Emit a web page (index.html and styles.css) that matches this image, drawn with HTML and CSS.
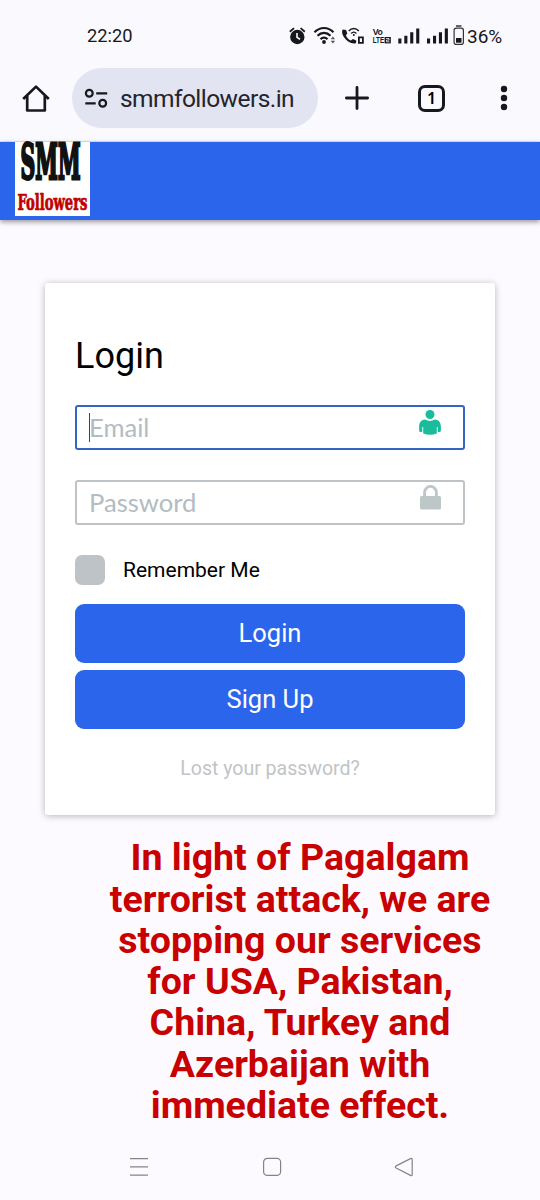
FILE: index.html
```html
<!DOCTYPE html>
<html lang="en">
<head>
    <meta charset="UTF-8">
    <meta name="viewport" content="width=device-width, initial-scale=1.0">
    <title>SMM Followers - Login</title>
    <link rel="stylesheet" href="styles.css">
</head>
<body>
    <!-- Status bar -->
    <div class="status-bar">
        <span class="time">22:20</span>
        <div class="status-icons">
            <svg width="22" height="24" viewBox="287 24 22 24">
                <circle cx="297.3" cy="37" r="7.2" fill="#17181d"/>
                <path d="M289.8 31.7l4.2-3.6M304.8 31.7l-4.2-3.6" stroke="#17181d" stroke-width="1.8"/>
                <path d="M297 33v4.4l3 1.8" fill="none" stroke="#faf9fe" stroke-width="1.6"/>
            </svg>
            <svg width="29" height="24" viewBox="309 24 29 24" fill="none" stroke="#17181d">
                <path d="M314.5 32.2c5.6-5.6 13.4-5.6 19 0M317.5 35.8c3.8-3.8 9.2-3.8 13 0M320.5 39.2c2-2.1 5-2.1 7 0" stroke-width="2.2"/>
                <circle cx="324" cy="42" r="1.9" fill="#17181d" stroke="none"/>
                <path d="M330.7 39.2l2.2-2.6 2.2 2.6zM330.7 40.8l2.2 2.6 2.2-2.6z" fill="#555" stroke="none"/>
            </svg>
            <svg width="32" height="24" viewBox="338 24 32 24" fill="none" stroke="#17181d">
                <path d="M342.8 29.6c-3 4 3.8 13.6 11.4 14 1.2 0 2-.7 2-1.6v-1.6l-3.3-1.4-2 1.6c-2.2-.9-4.2-3.1-5-5.3l1.4-1.9-1.2-3.5z" fill="#17181d" stroke="none"/>
                <path d="M348.8 31c2.8-3.4 7.2-3.4 10 0M351.2 33.5c1.6-1.9 3.6-1.9 5.2 0" stroke-width="1.4"/>
                <circle cx="353.8" cy="35" r="1" fill="#17181d" stroke="none"/>
                <path d="M358.9 37.4h4v5.4h-4z" stroke-width="1.8"/>
            </svg>
            <svg class="volte" width="24" height="24" viewBox="370 24 24 24">
                <text x="372.7" y="35" font-size="8.7" textLength="10">Vo</text>
                <text x="372.7" y="43.3" font-size="8.7" textLength="11.5" lengthAdjust="spacingAndGlyphs">LTE</text>
                <rect x="384.6" y="37" width="6.2" height="6.4" fill="#17181d"/>
                <path d="M386 38.5h3v1.6h-2.5v1.7h3" fill="none" stroke="#faf9fe" stroke-width=".8"/>
            </svg>
            <svg width="29" height="24" viewBox="394 24 29 24" fill="#17181d">
                <path d="M398.3 38.5h3.1v5h-3.1zM404.3 35.7h3.1v7.8h-3.1zM410.2 32.3h3.1v11.2h-3.1zM416.2 28.5h3.1v15h-3.1z"/>
            </svg>
            <svg width="28" height="24" viewBox="423 24 28 24" fill="#17181d">
                <path d="M427 38.5h3.1v5H427zM433 35.7h3.1v7.8H433zM438.9 32.3h3.1v11.2h-3.1zM444.8 28.5h3.1v15h-3.1z"/>
            </svg>
            <svg width="16" height="24" viewBox="451 24 16 24">
                <rect x="454.1" y="28.1" width="9.3" height="16.3" rx="2.2" fill="none" stroke="#333" stroke-width="1.2"/>
                <path d="M456 26h5.4" stroke="#333" stroke-width="1.5"/>
                <rect x="456" y="38" width="5.5" height="4.7" fill="#17181d"/>
            </svg>
            <span class="battery">36%</span>
        </div>
    </div>

    <!-- Browser toolbar -->
    <div class="toolbar">
        <svg class="home" width="28" height="28" viewBox="0 0 28 28" fill="none" stroke="#17181d" stroke-width="2.7" stroke-linejoin="round">
            <path d="M1.2 15L14 2.6 26.8 15M5.2 12v14.5h17.6V12" />
        </svg>
        <div class="address">
            <svg width="24" height="20" viewBox="0 0 24 20" fill="none" stroke="#17181d" stroke-width="2.2">
                <circle cx="5.3" cy="5.3" r="3.4"/>
                <path d="M12.2 5.4h11M1.3 15.3h10.4"/>
                <circle cx="18.7" cy="15.3" r="3.4"/>
            </svg>
            <span>smmfollowers.in</span>
        </div>
        <svg class="plus" width="24" height="24" viewBox="0 0 24 24" stroke="#17181d" stroke-width="2.8" stroke-linecap="round">
            <path d="M12 1.4v21.2M1.4 12h21.2"/>
        </svg>
        <div class="tabs">1</div>
        <svg class="dots" width="8" height="26" viewBox="0 0 8 26" fill="#17181d">
            <circle cx="4" cy="4" r="3.2"/>
            <circle cx="4" cy="13" r="3.2"/>
            <circle cx="4" cy="22" r="3.2"/>
        </svg>
    </div>

    <header class="header">
        <svg class="logo" width="75" height="74" viewBox="0 0 75 74">
            <rect width="75" height="74" fill="#fff"/>
            <text class="logo-smm" transform="translate(5.5 37) scale(1 1.4)" textLength="60" lengthAdjust="spacingAndGlyphs">SMM</text>
            <text class="logo-followers" transform="translate(2.5 67.5)" textLength="70" lengthAdjust="spacingAndGlyphs">Followers</text>
        </svg>
    </header>

    <main>
        <form class="login-form">
            <h1>Login</h1>
            <div class="field active">
                <span class="caret"></span>
                <span class="placeholder">Email</span>
                <svg class="user" width="22" height="26" viewBox="0 0 22 26" fill="#1abc9c">
                    <circle cx="11" cy="4.5" r="4.5"/>
                    <path d="M6 9.6Q11 12.2 16 9.6C20 9.9 21.9 12.8 21.9 16.9v3.6q0 1.5-1.5 1.5h-1.7v-5h-.9v6.4q-6.8 2.6-13.6 0V17h-.9v5H1.6Q.1 22 .1 20.5v-3.6C.1 12.8 2 9.9 6 9.6z"/>
                </svg>
            </div>
            <div class="field">
                <span class="placeholder">Password</span>
                <svg class="lock" width="21" height="25" viewBox="0 0 21 25" fill="#bdc7c7">
                    <path d="M4.6 12V7.6a5.9 6.2 0 0 1 11.8 0V12" fill="none" stroke="#bdc7c7" stroke-width="2.9"/>
                    <rect y="11" width="21" height="13.6" rx="1.5"/>
                </svg>
            </div>
            <div class="remember">
                <span class="checkbox"></span>
                <span>Remember Me</span>
            </div>
            <button type="button">Login</button>
            <button type="button">Sign Up</button>
            <a class="lost">Lost your password?</a>
        </form>

        <h2 class="notice">In light of Pagalgam<br>terrorist attack, we are<br>stopping our services<br>for USA, Pakistan,<br>China, Turkey and<br>Azerbaijan with<br>immediate effect.</h2>
    </main>

    <!-- Android navigation -->
    <nav class="nav-bar">
        <svg width="20" height="20" viewBox="0 0 20 20" fill="none" stroke="#858389" stroke-width="1.3">
            <path d="M1 1.7h18M1 9.8h18M1 18.1h18"/>
        </svg>
        <svg width="20" height="20" viewBox="0 0 20 20" fill="none" stroke="#858389" stroke-width="1.2">
            <rect x="1.6" y="1.4" width="17" height="17" rx="3.7"/>
        </svg>
        <svg width="20" height="20" viewBox="0 0 20 20" fill="none" stroke="#858389" stroke-width="1.2">
            <path d="M2.1 8.9L16.5 1.6q1.7-.7 1.7 1v14.8q0 1.7-1.7 1L2.1 11q-1.6-1 0-2.1z"/>
        </svg>
    </nav>
</body>
</html>
```
FILE: styles.css
```css
* {
    box-sizing: border-box;
}

body {
    margin: 0;
    height: 1200px;
    display: flex;
    flex-direction: column;
    overflow: hidden;
    background: #fdfaff;
    font-family: Roboto, sans-serif;
    color: #000;
}

svg {
    display: block;
    flex: none;
}

.status-bar {
    height: 60px;
    padding: 24px 37px 0 87px;
    display: flex;
    justify-content: space-between;
    background: #faf9fe;
    color: #17181d;
    font-size: 18.3px;
    line-height: 24px;
}

.status-icons {
    display: flex;
    height: 24px;
}

.battery {
    width: 36px;
    white-space: nowrap;
    font-size: 19px;
    line-height: 25px;
}

.volte text {
    font-family: "Liberation Sans", sans-serif;
    font-weight: bold;
    fill: #17181d;
}

.toolbar {
    height: 82px;
    padding: 8px 32px 13px 22px;
    display: flex;
    align-items: center;
    background: #faf9fe;
    border-bottom: 1px solid #e4e3e9;
}

.address {
    width: 246px;
    height: 60px;
    margin-left: 22px;
    padding-left: 12px;
    display: flex;
    align-items: center;
    gap: 12px;
    border-radius: 30px;
    background: #e2e4f2;
    color: #24252c;
    font-size: 24.5px;
    letter-spacing: -0.55px;
}

.plus {
    margin-left: 27px;
}

.tabs {
    width: 27px;
    height: 27px;
    margin-left: 49px;
    border: 3px solid #17181d;
    border-radius: 7px;
    font-family: "Noto Sans", sans-serif;
    font-size: 16px;
    font-weight: 600;
    line-height: 21px;
    text-align: center;
}

.dots {
    margin-left: auto;
}

.header {
    height: 78px;
    padding-left: 15px;
    background: #2b65ec;
    box-shadow: 0 2px 5px rgba(0, 0, 0, 0.4);
}

.logo {
    overflow: visible;
}

.logo text {
    font-family: "DejaVu Serif Condensed", "DejaVu Serif", serif;
    font-weight: bold;
}

.logo-smm {
    font-size: 34px;
    fill: #111;
    stroke: #111;
    stroke-width: 2px;
}

.logo-followers {
    font-size: 21.5px;
    fill: #c00000;
    stroke: #c00000;
    stroke-width: 0.7px;
}

.login-form {
    width: 450px;
    height: 532px;
    margin: 63px auto 0;
    padding: 51px 30px 0;
    display: flex;
    flex-direction: column;
    background: #fff;
    border-radius: 3px;
    box-shadow: 0 1px 7px rgba(0, 0, 0, 0.28);
}

h1 {
    margin: 0 0 27px;
    font-size: 36px;
    font-weight: 400;
    line-height: 44px;
}

.field {
    height: 45px;
    margin-bottom: 30px;
    padding: 0 22px 0 12px;
    display: flex;
    align-items: center;
    border: 2px solid #bdc3c7;
    border-radius: 3px;
    font-family: Lato, sans-serif;
    font-size: 25.6px;
    color: #b2bcc2;
}

.placeholder {
    padding-bottom: 2px;
}

.field.active {
    border-color: #3465c4;
}

.caret {
    width: 1px;
    height: 29px;
    margin-right: -1px;
    background: #34495e;
}

.field svg {
    align-self: flex-start;
    margin: 3px 0 0 auto;
}

.remember {
    height: 30px;
    margin-bottom: 19px;
    display: flex;
    align-items: center;
    gap: 18px;
    font-size: 21px;
}

.checkbox {
    width: 30px;
    height: 30px;
    border-radius: 7px;
    background: #bdc3c7;
}

button {
    height: 59px;
    margin-bottom: 7px;
    padding-bottom: 3px;
    border: none;
    border-radius: 9px;
    background: #2b65ec;
    color: #fff;
    font-family: Roboto, sans-serif;
    font-size: 25.5px;
}

.lost {
    margin-top: 21px;
    text-align: center;
    font-size: 19.5px;
    line-height: 24px;
    color: #bfc4c8;
}

.notice {
    margin: 22.4px 0 0 60px;
    text-align: center;
    color: #c80000;
    font-size: 37.5px;
    font-weight: 700;
    line-height: 41.25px;
}

.nav-bar {
    margin-top: auto;
    height: 43px;
    padding: 0 126px 0 129px;
    display: flex;
    justify-content: space-between;
}
```
